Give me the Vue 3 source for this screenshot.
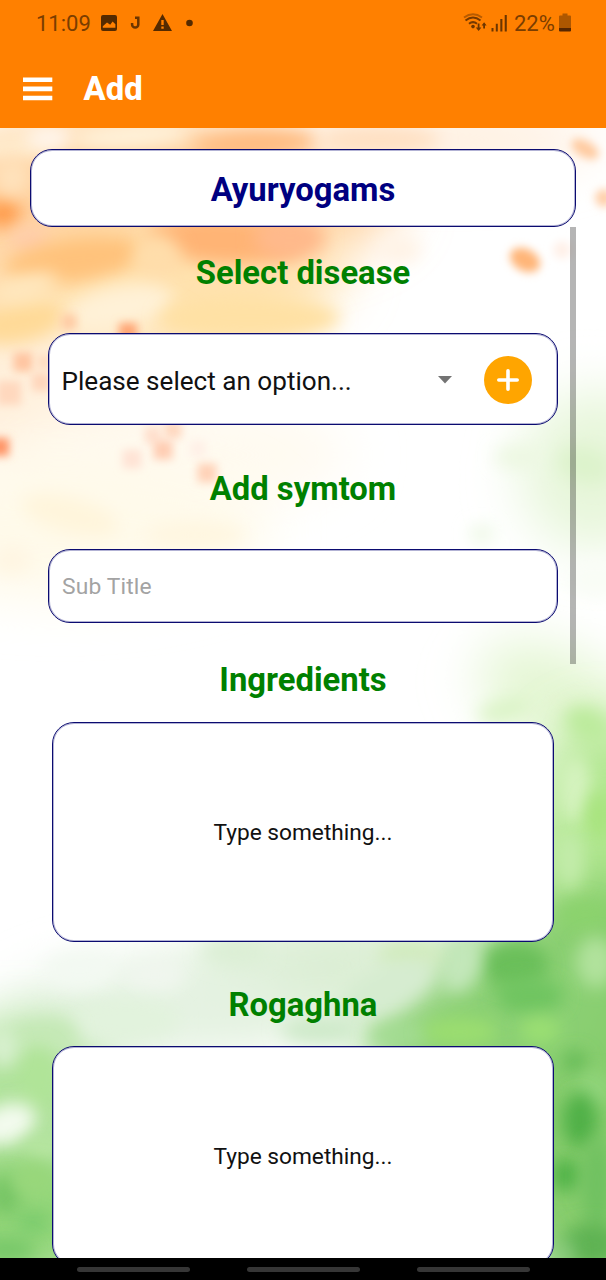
<script setup>
const washes = [
  // soft orange washes
  { x: 60, y: 250, rx: 190, ry: 120, c: '#ffdcae', r: -20 },
  { x: 170, y: 200, rx: 230, ry: 75, c: '#ffd2a0', r: 0 },
  { x: 170, y: 290, rx: 175, ry: 66, c: '#ffe2ae', r: -8 },
  { x: 60, y: 400, rx: 130, ry: 80, c: '#fff0dc', r: 0 },
  { x: 180, y: 455, rx: 170, ry: 55, c: '#fffaf0', r: 0 },
  { x: 60, y: 530, rx: 210, ry: 70, c: '#fffaea', r: 0 },
  { x: 440, y: 140, rx: 160, ry: 30, c: '#ffeedd', r: 0 },
  // pale greens on the right
  { x: 595, y: 470, rx: 75, ry: 80, c: '#e7f6da', r: 10 },
  { x: 565, y: 705, rx: 95, ry: 50, c: '#e4f6d3', r: 30 },
  { x: 605, y: 860, rx: 80, ry: 140, c: '#b2e791', r: 0 },
  { x: 610, y: 1090, rx: 140, ry: 210, c: '#86cc6c', r: 0 },
  { x: 490, y: 1015, rx: 130, ry: 75, c: '#8bd073', r: -15 },
  { x: 310, y: 970, rx: 130, ry: 55, c: '#dbeed4', r: -8 },
  { x: 150, y: 1010, rx: 150, ry: 50, c: '#e4f2e1', r: -5 },
  { x: 20, y: 1090, rx: 90, ry: 70, c: '#b0e29b', r: 0 },
  { x: 10, y: 1215, rx: 120, ry: 80, c: '#92d578', r: 0 }
]
const spots = [
  { x: 15, y: 145, rx: 45, ry: 14, c: '#ffeacb', r: 0 },
  { x: 50, y: 138, rx: 24, ry: 12, c: '#fff6ee', r: 0 },
  { x: 130, y: 136, rx: 60, ry: 13, c: '#fff2da', r: -4 },
  { x: 255, y: 144, rx: 62, ry: 15, c: '#ffbb80', r: -3 },
  { x: 380, y: 140, rx: 60, ry: 14, c: '#ffe0c2', r: 0 },
  { x: 3, y: 213, rx: 18, ry: 15, c: '#ff9c4c', r: 0 },
  { x: 12, y: 178, rx: 18, ry: 18, c: '#ffe2bc', r: 0 },
  { x: 30, y: 240, rx: 20, ry: 14, c: '#ffcdac', r: 0 },
  { x: 75, y: 260, rx: 70, ry: 22, c: '#ffc27c', r: -8 },
  { x: 225, y: 240, rx: 76, ry: 24, c: '#ffb475', r: 3 },
  { x: 290, y: 238, rx: 36, ry: 22, c: '#ffb98b', r: 0 },
  { x: 157, y: 258, rx: 24, ry: 24, c: '#ffddaa', r: 0 },
  { x: 120, y: 308, rx: 54, ry: 22, c: '#fff1d7', r: -12 },
  { x: 20, y: 322, rx: 44, ry: 20, c: '#ffda98', r: -12 },
  { x: 25, y: 288, rx: 34, ry: 13, c: '#ffe7be', r: -15 },
  { x: 250, y: 318, rx: 90, ry: 22, c: '#ffe1a4', r: 0 },
  { x: 400, y: 250, rx: 22, ry: 14, c: '#fff3e6', r: 0 },
  { x: 70, y: 515, rx: 50, ry: 18, c: '#fff5dc', r: 15 },
  { x: 195, y: 535, rx: 50, ry: 13, c: '#fff6e0', r: 0 },
  { x: 12, y: 560, rx: 20, ry: 14, c: '#fff5e2', r: 0 },
  { x: 520, y: 457, rx: 26, ry: 12, c: '#edf8e2', r: 0 },
  { x: 482, y: 534, rx: 12, ry: 9, c: '#ebf8e2', r: 0 },
  { x: 585, y: 465, rx: 28, ry: 18, c: '#ddf3cc', r: 15 },
  { x: 595, y: 580, rx: 30, ry: 20, c: '#f9fdf6', r: 0 },
  { x: 588, y: 725, rx: 24, ry: 16, c: '#bceb9c', r: 30 },
  { x: 505, y: 710, rx: 28, ry: 12, c: '#dcf4c8', r: -15 },
  { x: 575, y: 790, rx: 16, ry: 34, c: '#d5f3bf', r: 0 },
  { x: 600, y: 815, rx: 15, ry: 24, c: '#a9e47f', r: 0 },
  { x: 570, y: 860, rx: 14, ry: 30, c: '#c3ecaa', r: 0 },
  { x: 585, y: 915, rx: 28, ry: 14, c: '#8bd36d', r: 0 },
  { x: 596, y: 962, rx: 20, ry: 26, c: '#b1e29c', r: 0 },
  { x: 515, y: 965, rx: 34, ry: 24, c: '#6abf5a', r: 0 },
  { x: 530, y: 996, rx: 34, ry: 18, c: '#70c561', r: 0 },
  { x: 460, y: 965, rx: 20, ry: 28, c: '#c3e7ba', r: 15 },
  { x: 410, y: 955, rx: 32, ry: 15, c: '#d1ebbd', r: 0 },
  { x: 385, y: 990, rx: 52, ry: 22, c: '#d6ecd0', r: -25 },
  { x: 320, y: 1030, rx: 40, ry: 15, c: '#cfeaca', r: 0 },
  { x: 400, y: 1035, rx: 32, ry: 12, c: '#a3dc92', r: 0 },
  { x: 460, y: 1032, rx: 38, ry: 14, c: '#9bde70', r: 0 },
  { x: 540, y: 1030, rx: 20, ry: 13, c: '#9be072', r: 0 },
  { x: 575, y: 1062, rx: 12, ry: 11, c: '#63ba55', r: 0 },
  { x: 594, y: 1090, rx: 18, ry: 18, c: '#92d57b', r: 0 },
  { x: 580, y: 1120, rx: 17, ry: 28, c: '#50b047', r: 0 },
  { x: 566, y: 1175, rx: 15, ry: 16, c: '#50b246', r: 0 },
  { x: 597, y: 1185, rx: 15, ry: 48, c: '#70c160', r: 0 },
  { x: 592, y: 1245, rx: 30, ry: 22, c: '#5fb352', r: 0 },
  { x: 563, y: 1252, rx: 12, ry: 9, c: '#8bcc80', r: 0 },
  { x: 80, y: 970, rx: 36, ry: 20, c: '#f3f9f2', r: 0 },
  { x: 155, y: 975, rx: 30, ry: 17, c: '#f0f6ee', r: 0 },
  { x: 235, y: 952, rx: 34, ry: 14, c: '#dcefd5', r: 0 },
  { x: 125, y: 1020, rx: 55, ry: 22, c: '#e2f3dd', r: 0 },
  { x: 40, y: 1038, rx: 38, ry: 17, c: '#c5e9b6', r: -10 },
  { x: 38, y: 1078, rx: 20, ry: 32, c: '#b0e498', r: 0 },
  { x: 7, y: 1124, rx: 30, ry: 20, c: '#f3fbee', r: -20 },
  { x: 3, y: 1048, rx: 12, ry: 20, c: '#daf1d2', r: 0 },
  { x: 42, y: 1148, rx: 20, ry: 10, c: '#b9e7a3', r: 0 },
  { x: 6, y: 1195, rx: 16, ry: 20, c: '#76c565', r: 0 },
  { x: 33, y: 1222, rx: 17, ry: 12, c: '#7bcc6d', r: 0 },
  { x: 34, y: 1180, rx: 22, ry: 18, c: '#98d77a', r: 0 },
  { x: 6, y: 1250, rx: 30, ry: 12, c: '#76c768', r: 0 }
]
// small compact dabs of paint
const dabs = [
  { x: 525, y: 260, rx: 16, ry: 11, c: '#ffb578', r: 28 },
  { x: 562, y: 250, rx: 9, ry: 9, c: '#fff0e8', r: 0 },
  { x: 585, y: 149, rx: 15, ry: 8, c: '#ffcba0', r: 30 },
  { x: 604, y: 198, rx: 9, ry: 9, c: '#ffcfa8', r: 0 }
]
const flecks = [
  { x: 69, y: 322, s: 15, c: '#ffcba4' }, { x: 128, y: 332, s: 18, c: '#ffa574' },
  { x: 23, y: 362, s: 19, c: '#ffc5a0' }, { x: 41, y: 382, s: 18, c: '#ffd6bb' },
  { x: 9, y: 393, s: 24, c: '#ffd8be' }, { x: 44, y: 362, s: 14, c: '#ffdcc0' },
  { x: 0, y: 447, s: 18, c: '#ff9466' }, { x: 153, y: 435, s: 17, c: '#ffe0ce' },
  { x: 173, y: 430, s: 17, c: '#ffd8c0' }, { x: 163, y: 450, s: 19, c: '#ffcdb3' },
  { x: 132, y: 459, s: 19, c: '#ffe3d5' }, { x: 198, y: 449, s: 16, c: '#fff0e7' },
  { x: 207, y: 473, s: 19, c: '#ffd2b8' }
]
const notes = ['Ingredients', 'Rogaghna']
</script>

<template>
  <main class="screen">
    <header class="top">
      <div class="status">
        <span class="clock">11:09</span>
        <svg class="left-icons" width="95" height="22" viewBox="100 12 95 22">
          <path fill="#542a00" fill-rule="evenodd" d="M103 15h12q2 0 2 2v12q0 2-2 2h-12q-2 0-2-2V17q0-2 2-2zm-.2 12.800h12.600v-3.600l-2.800-2.600-2.400 3.100-3.200-2.300-4.200 3.900z" />
          <path fill="none" stroke="#6b3500" stroke-width="2.500" d="M135 17.700h3.300v6.800a3.100 3.100 0 0 1-6.200 0v-1.500" />
          <path fill="#542a00" fill-rule="evenodd" d="M162.500 14 172 31h-19zm-1.200 6v5h2.400v-5zm0 6.600v2.200h2.400v-2.200z" />
          <circle cx="189.500" cy="23" r="3.300" fill="#542a00" />
        </svg>
        <span class="gap"></span>
        <svg class="signal" width="46" height="22" viewBox="463 12 46 22">
          <g fill="none" stroke="#753900" stroke-width="2">
            <path stroke="#b75b00" d="M464 17.500q9-6.500 18 0" />
            <path d="M465.500 20.500q7.500-6 15 0M469 23.800q4-3.300 8 0" />
          </g>
          <circle cx="473" cy="26.600" r="1.800" fill="#6b3500" />
          <path fill="#6b3500" d="M477.700 23.500h1.800v4h1.900l-2.800 3.600-2.800-3.600h1.900zM483.200 28.500h1.800v-3h1.600l-2.500-3.200-2.500 3.200h1.600zM491.500 28h2v3.500h-2zM495.800 23.800h2v7.700h-2zM500.300 19h2.100v12.500h-2.100zM504.700 15h2.100v16.500h-2.100z" />
        </svg>
        <span class="pct">22%</span>
        <svg class="battery" width="12" height="20" viewBox="0 0 12 20">
          <path fill="#ae5700" d="M3.500.5h5v2H11q1 0 1 1V15H0V3.500q0-1 1-1h2.500z" />
          <path fill="#572600" d="M0 15h12v2.500q0 1-1 1H1q-1 0-1-1z" />
        </svg>
      </div>
      <div class="bar">
        <svg class="menu" width="30" height="24" viewBox="0 0 30 24">
          <path fill="#fff" d="M0 .5h29.300v4.600H0zM0 9.600h29.300v4.600H0zM0 18.700h29.300v4.600H0z" />
        </svg>
        <h1>Add</h1>
      </div>
    </header>

    <section class="body">
      <svg class="paint" width="606" height="1130" viewBox="0 128 606 1130">
        <defs>
          <filter id="wide" x="-60%" y="-150%" width="220%" height="400%"><feGaussianBlur stdDeviation="26" /></filter>
          <filter id="mid" x="-200%" y="-200%" width="500%" height="500%"><feGaussianBlur stdDeviation="8.500" /></filter>
          <filter id="fine" x="-80%" y="-80%" width="260%" height="260%"><feGaussianBlur stdDeviation="4" /></filter>
        </defs>
        <ellipse v-for="(b, i) in washes" :key="'w' + i" :cx="b.x" :cy="b.y" :rx="b.rx" :ry="b.ry" :fill="b.c" :transform="`rotate(${b.r} ${b.x} ${b.y})`" filter="url(#wide)" />
        <ellipse v-for="(b, i) in spots" :key="'s' + i" :cx="b.x" :cy="b.y" :rx="b.rx" :ry="b.ry" :fill="b.c" :transform="`rotate(${b.r} ${b.x} ${b.y})`" filter="url(#mid)" />
        <ellipse v-for="(b, i) in dabs" :key="'d' + i" :cx="b.x" :cy="b.y" :rx="b.rx" :ry="b.ry" :fill="b.c" :transform="`rotate(${b.r} ${b.x} ${b.y})`" filter="url(#fine)" />
        <rect v-for="(f, i) in flecks" :key="'f' + i" :x="f.x - f.s / 2" :y="f.y - f.s / 2" :width="f.s" :height="f.s" :fill="f.c" filter="url(#fine)" />
      </svg>

      <div class="box title">Ayuryogams</div>
      <div class="form">
        <span class="scrollbar"></span>
        <h2 class="disease">Select disease</h2>
        <div class="box select">
          <span class="option">Please select an option...</span>
          <svg class="caret" width="14" height="8" viewBox="0 0 14 8"><path fill="#737373" d="M0 0h14L7 7.500z" /></svg>
          <svg width="48" height="48" viewBox="0 0 48 48">
            <circle cx="24" cy="24" r="24" fill="#ffa500" />
            <path fill="none" stroke="#fff" stroke-width="3.600" stroke-linecap="round" d="M24 14.800v18.400M14.800 24h18.400" />
          </svg>
        </div>
        <h2 class="symptom">Add symtom</h2>
        <div class="box field">Sub Title</div>
        <template v-for="n in notes" :key="n">
          <h2 class="note-title" :class="n.toLowerCase()">{{ n }}</h2>
          <div class="box note">Type something...</div>
        </template>
      </div>
    </section>
    <nav><i></i><i></i><i></i></nav>
  </main>
</template>

<style>
body { margin: 0; background: #fff; }
</style>

<style scoped>
* { box-sizing: border-box; }
.screen { width: 606px; height: 1280px; overflow: hidden; display: flex; flex-direction: column; font-family: Roboto, sans-serif; background: #fff; }
.top { height: 128px; flex: none; background: #ff8000; }
.status { height: 48px; padding: 0 35px 0 36px; display: flex; align-items: center; color: #7a3d00; font-size: 22px; line-height: 48px; }
.status svg { flex: none; }
.clock { width: 64px; }
.left-icons { margin-top: -2px; }
.gap { flex: 1; }
.signal { margin-top: -2px; margin-right: 5px; }
.pct { width: 45px; }
.battery { margin-top: -3px; }
.bar { height: 80px; padding: 1px 0 0 23px; display: flex; align-items: center; }
h1 { margin: 0 0 0 30.5px; font-size: 32.8px; line-height: 40px; font-weight: 800; color: #fff; padding-top: 1px; }
.body { height: 1130px; flex: none; position: relative; overflow: hidden; padding-top: 21px; }
.paint { position: absolute; left: 0; top: 0; }
.box { position: relative; background: #fff; border: 1px solid #0b0b70; box-shadow: inset 0 0 0 1px rgba(0, 0, 112, .3); border-radius: 22px; display: flex; align-items: center; }
.title { width: 546px; height: 78px; margin: 0 auto; justify-content: center; font-size: 32.8px; font-weight: 700; color: #000080; padding-top: 3px; }
.form { position: relative; display: flex; flex-direction: column; align-items: center; padding-top: 25px; }
.scrollbar { position: absolute; left: 570px; top: 0; width: 6px; height: 436.500px; background: rgba(0, 0, 0, .29); z-index: 2; }
h2 { position: relative; margin: 0; height: 40px; padding-top: 1px; font-size: 32.8px; line-height: 40px; font-weight: 700; color: #008000; }
.select { width: 510px; height: 92px; margin-top: 41px; padding: 1px 25px 0 12.5px; }
.option { font-size: 26.1px; flex: 1; color: #111; padding-top: 3px; }
.caret { margin-right: 32px; }
.symptom { margin-top: 43px; }
.field { width: 510px; height: 74px; margin-top: 41px; padding: 1px 13px 0; font-size: 22.8px; letter-spacing: .15px; color: #a3a3a3; }
.note-title { margin-top: 36px; }
.ingredients { margin-bottom: 1px; }
.rogaghna { margin-top: 42px; }
.note { width: 502px; height: 220px; margin-top: 22px; padding-top: 1px; justify-content: center; font-size: 22.7px; color: #111; }
nav { height: 22px; flex: none; background: #000; display: flex; justify-content: center; gap: 57px; padding-top: 9px; }
nav i { width: 113px; height: 5px; border-radius: 3px; background: #363636; }
</style>
